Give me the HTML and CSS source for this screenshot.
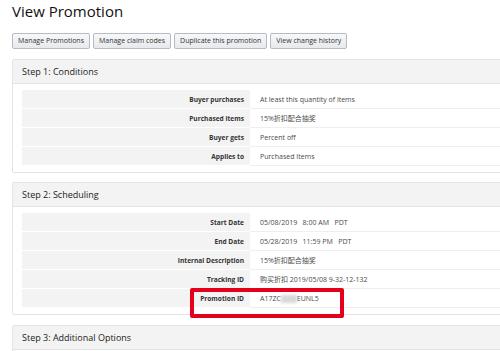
FILE: index.html
```html
<!DOCTYPE html>
<html>
<head>
<meta charset="utf-8">
<link rel="stylesheet" href="styles.css">
</head>
<body>
<div class="page">
  <h1 class="title">View Promotion</h1>
  <div class="actions">
    <button class="btn">Manage Promotions</button>
    <button class="btn">Manage claim codes</button>
    <button class="btn">Duplicate this promotion</button>
    <button class="btn">View change history</button>
  </div>

  <section class="panel">
    <div class="panel-head">Step 1: Conditions</div>
    <div class="panel-body">
      <div class="grid">
        <div class="lbl">Buyer purchases</div><div class="val">At least this quantity of items</div>
        <div class="lbl">Purchased items</div><div class="val">15%折扣配合抽奖</div>
        <div class="lbl">Buyer gets</div><div class="val">Percent off</div>
        <div class="lbl">Applies to</div><div class="val">Purchased Items</div>
      </div>
    </div>
  </section>

  <section class="panel">
    <div class="panel-head">Step 2: Scheduling</div>
    <div class="panel-body">
      <div class="grid">
        <div class="lbl">Start Date</div><div class="val">05/08/2019&nbsp;&nbsp; 8:00 AM&nbsp;&nbsp; PDT</div>
        <div class="lbl">End Date</div><div class="val">05/28/2019&nbsp;&nbsp; 11:59 PM&nbsp;&nbsp; PDT</div>
        <div class="lbl">Internal Description</div><div class="val">15%折扣配合抽奖</div>
        <div class="lbl">Tracking ID</div><div class="val">购买折扣 2019/05/08 9-32-12-132</div>
        <div class="lbl">Promotion ID</div><div class="val">A17ZC<span class="blur"></span>EUNL5</div>
      </div>
      <div class="highlight"></div>
    </div>
  </section>

  <section class="panel panel-last">
    <div class="panel-head">Step 3: Additional Options</div>
    <div class="panel-body"></div>
  </section>
</div>
</body>
</html>
```

FILE: styles.css
```css
html, body {
  margin: 0;
  padding: 0;
  overflow: hidden;
  background: #fff;
}
body {
  font-family: "Open Sans", "Noto Sans CJK SC", sans-serif;
  color: #333;
}
.page {
  width: 600px;
  padding: 0 0 0 12px;
}
.title {
  margin: 0;
  font-size: 15px;
  font-weight: 400;
  line-height: 22px;
  color: #111;
}
.actions {
  display: flex;
  gap: 3px;
  margin-top: 11px;
}
.btn {
  font-family: "Open Sans", sans-serif;
  font-size: 7px;
  color: #333;
  height: 16px;
  padding: 0 5px;
  border: 1px solid #b8bcc2;
  border-radius: 2px;
  background: linear-gradient(#f7f8fa, #e7e9ec);
  line-height: 14px;
  margin: 0;
}
.panel {
  margin-top: 10px;
  border: 1px solid #e3e3e3;
  border-radius: 2px;
}
.panel + .panel {
  margin-top: 9px;
}
.panel.panel-last {
  margin-top: 10px;
}
.panel-head {
  background: #f3f3f3;
  border-bottom: 1px solid #e3e3e3;
  height: 23px;
  line-height: 24px;
  padding-left: 9px;
  font-size: 9px;
  color: #222;
}
.panel-body {
  position: relative;
  padding: 6px 9px;
}
.grid {
  display: grid;
  grid-template-columns: 228px 1fr;
  grid-auto-rows: 19px;
}
.lbl, .val {
  font-size: 7px;
  line-height: 16px;
  padding-top: 2px;
  border-bottom: 1px solid #fff;
}
.lbl {
  background: #f3f3f3;
  text-align: right;
  font-weight: 700;
  font-size: 6.6px;
  padding-right: 6px;
  color: #333;
}
.val {
  padding-left: 10px;
  color: #4a4a4a;
  border-bottom: 1px solid #efefef;
}
.blur {
  display: inline-block;
  width: 16px;
  height: 8px;
  background: #d8d8d8;
  filter: blur(1.5px);
  vertical-align: middle;
}
.highlight {
  position: absolute;
  left: 177px;
  top: 81px;
  width: 146px;
  height: 22px;
  border: 4px solid #e4001b;
  border-radius: 2px;
}
```
